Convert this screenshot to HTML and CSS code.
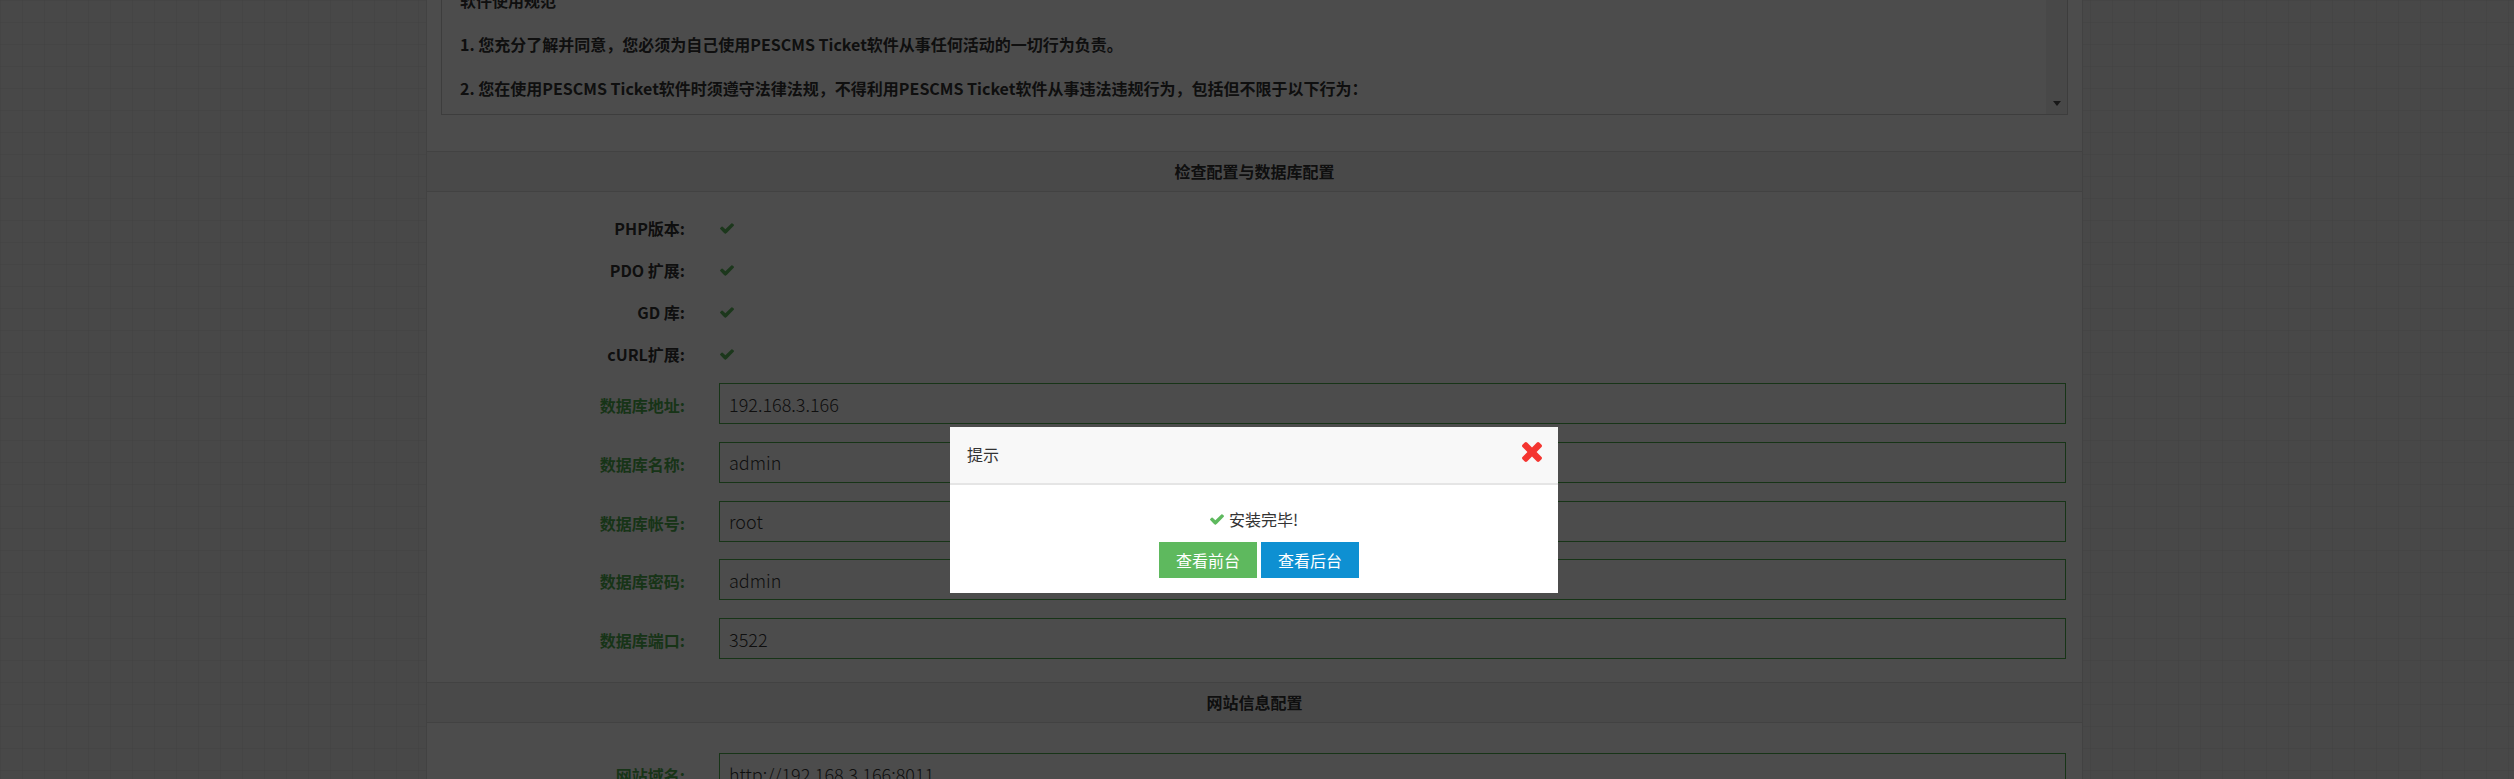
FILE: index.html
```html
<!DOCTYPE html>
<html lang="zh-CN">
<head>
  <meta charset="UTF-8" />
  <meta name="viewport" content="width=device-width, initial-scale=1.0"/>
  <title>PESCMS Ticket 安装</title>
  <link rel="stylesheet" href="styles.css">
</head>
<body>
  <div class="install">
    <div class="section">
      <div class="terms">
        <div class="terms-text">
          <p>软件使用规范</p>
          <p>1. 您充分了解并同意，您必须为自己使用PESCMS Ticket软件从事任何活动的一切行为负责。</p>
          <p>2. 您在使用PESCMS Ticket软件时须遵守法律法规，不得利用PESCMS Ticket软件从事违法违规行为，包括但不限于以下行为：</p>
          <p>(1) 发布、传送、传播、储存违反国家法律法规禁止的内容。</p>
        </div>
        <div class="scrollbar"><span class="arrow"></span></div>
      </div>
    </div>

    <div class="section-head">检查配置与数据库配置</div>
    <div class="section form first">
      <div class="row check-row">
        <label>PHP版本:</label>
        <div class="ctrl"><svg class="ok" viewBox="121 334 1550 1188"><path d="M1671 566q0 40-28 68l-724 724-136 136q-28 28-68 28t-68-28l-136-136-362-362q-28-28-28-68t28-68l136-136q28-28 68-28t68 28l294 295 656-657q28-28 68-28t68 28l136 136q28 28 28 68z"/></svg></div>
      </div>
      <div class="row check-row">
        <label>PDO 扩展:</label>
        <div class="ctrl"><svg class="ok" viewBox="121 334 1550 1188"><path d="M1671 566q0 40-28 68l-724 724-136 136q-28 28-68 28t-68-28l-136-136-362-362q-28-28-28-68t28-68l136-136q28-28 68-28t68 28l294 295 656-657q28-28 68-28t68 28l136 136q28 28 28 68z"/></svg></div>
      </div>
      <div class="row check-row">
        <label>GD 库:</label>
        <div class="ctrl"><svg class="ok" viewBox="121 334 1550 1188"><path d="M1671 566q0 40-28 68l-724 724-136 136q-28 28-68 28t-68-28l-136-136-362-362q-28-28-28-68t28-68l136-136q28-28 68-28t68 28l294 295 656-657q28-28 68-28t68 28l136 136q28 28 28 68z"/></svg></div>
      </div>
      <div class="row check-row">
        <label>cURL扩展:</label>
        <div class="ctrl"><svg class="ok" viewBox="121 334 1550 1188"><path d="M1671 566q0 40-28 68l-724 724-136 136q-28 28-68 28t-68-28l-136-136-362-362q-28-28-28-68t28-68l136-136q28-28 68-28t68 28l294 295 656-657q28-28 68-28t68 28l136 136q28 28 28 68z"/></svg></div>
      </div>

      <div class="fields">
        <div class="row field">
          <label>数据库地址:</label>
          <div class="ctrl"><input type="text" value="192.168.3.166"></div>
        </div>
        <div class="row field">
          <label>数据库名称:</label>
          <div class="ctrl"><input type="text" value="admin"></div>
        </div>
        <div class="row field">
          <label>数据库帐号:</label>
          <div class="ctrl"><input type="text" value="root"></div>
        </div>
        <div class="row field">
          <label>数据库密码:</label>
          <div class="ctrl"><input type="text" value="admin"></div>
        </div>
        <div class="row field">
          <label>数据库端口:</label>
          <div class="ctrl"><input type="text" value="3522"></div>
        </div>
      </div>
    </div>

    <div class="section-head">网站信息配置</div>
    <div class="section form second">
      <div class="fields">
        <div class="row field">
          <label>网站域名:</label>
          <div class="ctrl"><input type="text" value="http://192.168.3.166:8011"></div>
        </div>
        <div class="row field">
          <label>网站名称:</label>
          <div class="ctrl"><input type="text" value="PESCMS Ticket"></div>
        </div>
      </div>
    </div>
  </div>

  <div class="mask"></div>

  <div class="modal">
    <div class="modal-head">
      <span class="modal-title">提示</span>
      <svg class="close" viewBox="110 366 1188 1188"><path d="M1298 1322q0 40-28 68l-136 136q-28 28-68 28t-68-28l-294-294-294 294q-28 28-68 28t-68-28l-136-136q-28-28-28-68t28-68l294-294-294-294q-28-28-28-68t28-68l136-136q28-28 68-28t68 28l294 294 294-294q28-28 68-28t68 28l136 136q28 28 28 68t-28 68l-294 294 294 294q28 28 28 68z"/></svg>
    </div>
    <div class="modal-body">
      <div class="msg">
        <svg class="ok" viewBox="121 334 1550 1188"><path d="M1671 566q0 40-28 68l-724 724-136 136q-28 28-68 28t-68-28l-136-136-362-362q-28-28-28-68t28-68l136-136q28-28 68-28t68 28l294 295 656-657q28-28 68-28t68 28l136 136q28 28 28 68z"/></svg>
        <span>安装完毕!</span>
      </div>
      <div class="actions">
        <button class="btn btn-success">查看前台</button>
        <button class="btn btn-primary">查看后台</button>
      </div>
    </div>
  </div>
</body>
</html>
```

FILE: styles.css
```css
html, body {
  height: 100%;
  overflow: hidden;
}
body {
  margin: 0;
  padding-right: 5px;
  font-family: "Noto Sans CJK SC", sans-serif;
  font-size: 16px;
  color: #333;
  background-color: #f0f0f0;
  background-image:
    linear-gradient(rgba(0, 0, 0, 0.03) 1px, transparent 1px),
    linear-gradient(90deg, rgba(0, 0, 0, 0.03) 1px, transparent 1px);
  background-size: 22px 22px;
}
.install {
  width: 1657px;
  box-sizing: border-box;
  margin: -36px auto 0;
  background: #fff;
  border-left: 1px solid #ddd;
  border-right: 1px solid #ddd;
}
.section {
  padding: 15px 14px 36px;
}
.terms {
  display: flex;
  height: 136px;
  box-sizing: border-box;
  border: 1px solid #ccc;
  overflow: hidden;
}
.terms-text {
  flex: 1;
  padding: 10px 18px;
  font-weight: bold;
  line-height: 20px;
}
.terms-text p {
  margin: 0 0 24px;
  white-space: nowrap;
}
.scrollbar {
  width: 21px;
  background: #f1f1f1;
  display: flex;
  align-items: flex-end;
  justify-content: center;
  padding-bottom: 8px;
  box-sizing: border-box;
}
.arrow {
  width: 0;
  height: 0;
  border-left: 4.5px solid transparent;
  border-right: 4.5px solid transparent;
  border-top: 5px solid #505050;
}
.section-head {
  height: 41px;
  box-sizing: border-box;
  border-top: 1px solid #ddd;
  border-bottom: 1px solid #ddd;
  background: #f6f6f6;
  text-align: center;
  line-height: 39px;
  font-weight: bold;
}
.form {
  padding: 15px 0 23px;
}
.form.second {
  padding-top: 22px;
}
.row {
  display: flex;
  align-items: center;
}
.row label {
  width: 276px;
  box-sizing: border-box;
  padding-right: 18px;
  text-align: right;
  font-weight: bold;
  white-space: nowrap;
}
.ctrl {
  flex: 1;
  padding: 0 16px;
  display: flex;
  align-items: center;
}
.check-row {
  height: 42px;
}
.check-row .ok {
  margin-left: 1px;
}
.ok {
  width: 14px;
  height: 11px;
  fill: #5eb95e;
}
.fields {
  margin-top: 8px;
}
.field {
  margin-bottom: 17.75px;
}
.field:last-child {
  margin-bottom: 0;
}
.field label {
  color: #4fae4f;
  padding-top: 3px;
}
.field input {
  width: 100%;
  height: 41px;
  box-sizing: border-box;
  border: 1px solid #4fae4f;
  padding: 0 9px;
  font-family: "Noto Sans CJK SC", sans-serif;
  font-size: 18px;
  font-weight: 300;
  color: #333;
  background: #fff;
  outline: none;
}
.mask {
  position: fixed;
  inset: 0;
  background: rgba(0, 0, 0, 0.7);
}
.modal {
  position: fixed;
  top: 427px;
  left: calc(50% - 307px);
  width: 608px;
  background: #fff;
}
.modal-head {
  height: 58px;
  box-sizing: border-box;
  display: flex;
  align-items: center;
  justify-content: space-between;
  padding: 0 16px 2px 17px;
  background: #f8f8f8;
  border-bottom: 2px solid #e5e5e5;
}
.modal-title {
  color: #333;
  line-height: 20px;
}
.close {
  width: 20px;
  height: 20px;
  fill: #f43530;
  margin-top: -4px;
}
.modal-body {
  padding: 24px 0 15px;
  text-align: center;
}
.msg {
  display: flex;
  justify-content: center;
  align-items: center;
  gap: 5px;
  line-height: 20px;
  color: #333;
}
.actions {
  margin-top: 13px;
  display: flex;
  justify-content: center;
  gap: 4px;
  padding-left: 10px;
}
.btn {
  height: 36px;
  padding: 0 17px;
  border: none;
  font-family: "Noto Sans CJK SC", sans-serif;
  font-size: 16px;
  color: #fff;
  cursor: pointer;
}
.btn-success {
  background: #5eb95e;
}
.btn-primary {
  background: #0e90d2;
}
```
